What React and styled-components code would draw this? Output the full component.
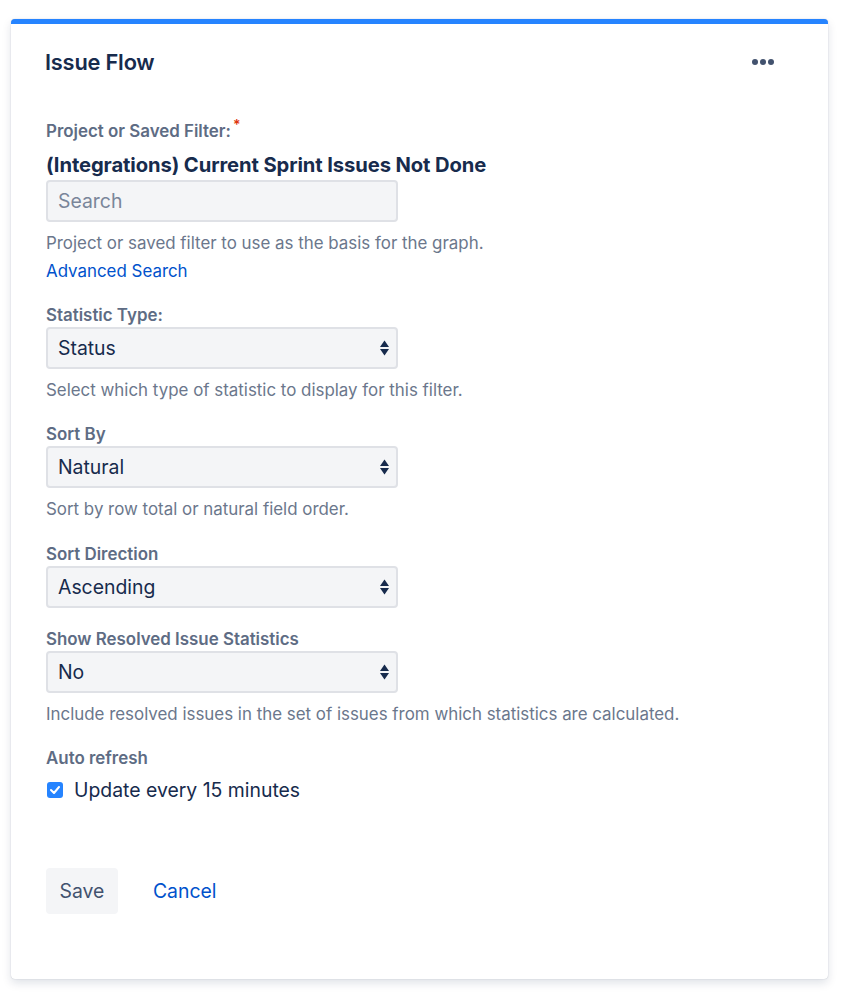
import React from "react";
import styled, { createGlobalStyle } from "styled-components";

const Global = createGlobalStyle`
  html, body { margin: 0; padding: 0; background: #fff; }
  body { font-family: Inter, "Noto Sans", "Liberation Sans", sans-serif; -webkit-font-smoothing: antialiased; }
  * { box-sizing: border-box; }
`;

const Page = styled.div`
  padding: 19px 22px 19px 11px;
`;

const Card = styled.section`
  width: 817px;
  background: #fff;
  border-radius: 4px;
  border-top: 5px solid #2684ff;
  box-shadow: 0 4px 10px rgba(9, 30, 66, 0.13), 0 0 1px rgba(9, 30, 66, 0.31);
  padding: 24px 54px 65px 35px;
`;

const Header = styled.header`
  display: flex;
  align-items: center;
  justify-content: space-between;
  height: 28px;
  margin-left: -1px;
`;

const Title = styled.h2`
  margin: 0;
  font-size: 21.8px;
  line-height: 28px;
  font-weight: 600;
  color: #172b4d;
  letter-spacing: -0.2px;
`;

const MoreButton = styled.button`
  border: 0;
  background: none;
  padding: 0;
  display: flex;
  gap: 2px;
  cursor: pointer;
`;

const Dot = styled.span`
  width: 6px;
  height: 6px;
  border-radius: 50%;
  background: #42526e;
`;

const Form = styled.form`
  display: flex;
  flex-direction: column;
  gap: 21px;
  margin-top: 45px;
`;

const Field = styled.div`
  display: flex;
  flex-direction: column;
`;

const Label = styled.label`
  font-size: 16.9px;
  line-height: 20px;
  font-weight: 600;
  color: #5e6c84;
  margin-bottom: ${(p) => p.$gap ?? 2}px;
`;

const Required = styled.span`
  color: #de350b;
  font-size: 14px;
  position: relative;
  top: -7px;
  margin-left: 2px;
`;

const Value = styled.div`
  font-size: 20.2px;
  line-height: 24px;
  font-weight: 700;
  color: #172b4d;
  margin-bottom: 3px;
  letter-spacing: -0.1px;
`;

const InputBox = styled.div`
  width: 352px;
  height: 42px;
  background: #f4f5f7;
  border: 2px solid #dfe1e6;
  border-radius: 4px;
  display: flex;
  align-items: center;
  padding: 0 10px;
  position: relative;
`;

const Placeholder = styled.span`
  font-size: 19.4px;
  color: #7a869a;
`;

const SelectText = styled.span`
  font-size: 19.4px;
  color: #172b4d;
`;

const Arrows = styled.svg`
  position: absolute;
  right: 6px;
  top: 50%;
  transform: translateY(-50%);
`;

const Help = styled.div`
  font-size: 16.9px;
  line-height: 26px;
  color: #6b778c;
  margin-top: 8px;
  padding-bottom: 0.5px;
`;

const Link = styled.a`
  font-size: 16.9px;
  line-height: 20px;
  color: #0052cc;
  text-decoration: none;
  margin-top: 4px;
  margin-bottom: 3px;
  align-self: flex-start;
`;

const CheckRow = styled.div`
  display: flex;
  align-items: center;
  gap: 11px;
  height: 24px;
  margin-top: 8px;
`;

const CheckBox = styled.span`
  width: 16px;
  height: 16px;
  border-radius: 3px;
  background: #2684ff;
  display: flex;
  align-items: center;
  justify-content: center;
  margin-left: 1px;
`;

const CheckText = styled.span`
  font-size: 19.4px;
  color: #172b4d;
`;

const Actions = styled.div`
  display: flex;
  align-items: center;
  gap: 14px;
  margin-top: 66px;
`;

const Button = styled.button`
  height: 46px;
  padding: 0 ${(p) => (p.$link ? 21 : 13.5)}px;
  border: 0;
  border-radius: 4px;
  font-family: inherit;
  font-size: 19.4px;
  background: ${(p) => (p.$link ? "transparent" : "#f4f5f7")};
  color: ${(p) => (p.$link ? "#0052cc" : "#42526e")};
  cursor: pointer;
`;

const SelectArrows = () => (
  <Arrows width="11" height="18" viewBox="0 0 11 18">
    <path d="M5.5 1.5 L10 8 H1 Z" fill="#172b4d" />
    <path d="M5.5 16.5 L10 10 H1 Z" fill="#172b4d" />
  </Arrows>
);

const Select = ({ value }) => (
  <InputBox>
    <SelectText>{value}</SelectText>
    <SelectArrows />
  </InputBox>
);

const SelectField = ({ label, value, help }) => (
  <Field>
    <Label>{label}</Label>
    <Select value={value} />
    {help && <Help>{help}</Help>}
  </Field>
);

export default function App() {
  return (
    <>
      <Global />
      <Page>
        <Card>
          <Header>
            <Title>Issue Flow</Title>
            <MoreButton type="button" aria-label="More">
              <Dot />
              <Dot />
              <Dot />
            </MoreButton>
          </Header>
          <Form>
            <Field>
              <Label $gap={11}>
                Project or Saved Filter:<Required>*</Required>
              </Label>
              <Value>(Integrations) Current Sprint Issues Not Done</Value>
              <InputBox>
                <Placeholder>Search</Placeholder>
              </InputBox>
              <Help>Project or saved filter to use as the basis for the graph.</Help>
              <Link href="#">Advanced Search</Link>
            </Field>
            <SelectField
              label="Statistic Type:"
              value="Status"
              help="Select which type of statistic to display for this filter."
            />
            <SelectField
              label="Sort By"
              value="Natural"
              help="Sort by row total or natural field order."
            />
            <SelectField label="Sort Direction" value="Ascending" />
            <SelectField
              label="Show Resolved Issue Statistics"
              value="No"
              help="Include resolved issues in the set of issues from which statistics are calculated."
            />
            <Field>
              <Label>Auto refresh</Label>
              <CheckRow>
                <CheckBox>
                  <svg width="10" height="8" viewBox="0 0 10 8">
                    <path d="M1 4 L4 7 L9 1" stroke="#fff" strokeWidth="2" fill="none" strokeLinecap="round" strokeLinejoin="round" />
                  </svg>
                </CheckBox>
                <CheckText>Update every 15 minutes</CheckText>
              </CheckRow>
            </Field>
          </Form>
          <Actions>
            <Button type="button">Save</Button>
            <Button type="button" $link>Cancel</Button>
          </Actions>
        </Card>
      </Page>
    </>
  );
}
